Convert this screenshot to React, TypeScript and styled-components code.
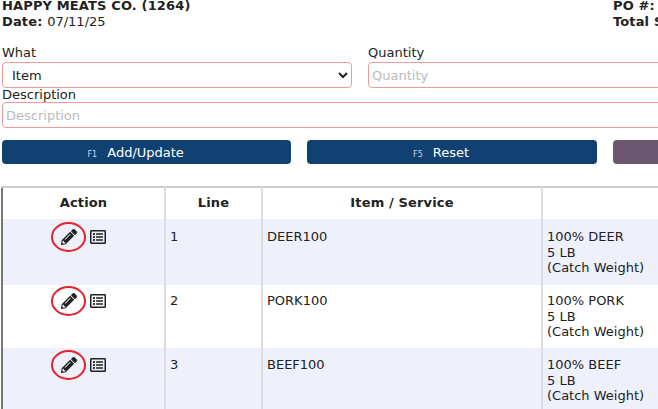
import styled, { createGlobalStyle } from 'styled-components';
import { FaPencilAlt, FaRegListAlt } from 'react-icons/fa';

const GlobalStyle = createGlobalStyle`
  html, body {
    margin: 0;
    padding: 0;
    height: 100%;
    overflow: hidden;
    background: #fff;
  }
  body {
    font-family: "DejaVu Sans", Verdana, sans-serif;
    font-size: 13px;
    color: #222;
  }
`;

type Row = { line: number; item: string; desc: string; height: number; top: number };

const rows: Row[] = [
  { line: 1, item: 'DEER100', desc: '100% DEER', height: 66, top: 10 },
  { line: 2, item: 'PORK100', desc: '100% PORK', height: 63, top: 8 },
  { line: 3, item: 'BEEF100', desc: '100% BEEF', height: 66, top: 9 },
];

export default function App() {
  return (
    <Page>
      <GlobalStyle />
      <Header>
        <div>
          <HeaderLine>HAPPY MEATS CO. (1264)</HeaderLine>
          <HeaderLine>
            Date: <Plain>07/11/25</Plain>
          </HeaderLine>
        </div>
        <div>
          <HeaderLine>PO #:</HeaderLine>
          <HeaderLine>Total Sales:</HeaderLine>
        </div>
      </Header>

      <FormRow>
        <Field>
          <Label>What</Label>
          <Select defaultValue="Item">
            <option>Item</option>
          </Select>
        </Field>
        <Field>
          <Label>Quantity</Label>
          <Input placeholder="Quantity" />
        </Field>
      </FormRow>
      <Field>
        <Label $tight>Description</Label>
        <Input placeholder="Description" />
      </Field>

      <Buttons>
        <Button>
          <Key>F1</Key>Add/Update
        </Button>
        <Button>
          <Key>F5</Key>Reset
        </Button>
        <Button $muted />
      </Buttons>

      <Table>
        <colgroup>
          <col width={163} />
          <col width={97} />
          <col width={280} />
          <col />
        </colgroup>
        <thead>
          <tr>
            <Th>Action</Th>
            <Th>Line</Th>
            <Th>Item / Service</Th>
            <Th>Description</Th>
          </tr>
        </thead>
        <tbody>
          {rows.map((row) => (
            <Tr key={row.line} $height={row.height}>
              <ActionCell $top={row.top}>
                <Actions>
                  <PencilRing>
                    <FaPencilAlt size={16} />
                  </PencilRing>
                  <FaRegListAlt size={16} />
                </Actions>
              </ActionCell>
              <Td $top={row.top}>{row.line}</Td>
              <Td $top={row.top}>{row.item}</Td>
              <Td $top={row.top}>
                {row.desc}
                <br />5 LB
                <br />
                (Catch Weight)
              </Td>
            </Tr>
          ))}
        </tbody>
      </Table>
    </Page>
  );
}

const Page = styled.div`
  width: 906px;
  margin-top: -2px;
  padding: 0 2px;
  box-sizing: border-box;
`;

const Header = styled.header`
  display: grid;
  grid-template-columns: 611px 1fr;
  margin-bottom: 15px;
`;

const HeaderLine = styled.div`
  font-weight: bold;
  line-height: 16px;
  letter-spacing: 0.14px;
  white-space: nowrap;
`;

const Plain = styled.span`
  font-weight: normal;
  letter-spacing: 0;
`;

const FormRow = styled.div`
  display: grid;
  grid-template-columns: 350px 1fr;
  gap: 16px;
`;

const Field = styled.div`
  display: flex;
  flex-direction: column;
`;

const Label = styled.label<{ $tight?: boolean }>`
  line-height: ${(p) => (p.$tight ? '14px' : '16px')};
  margin-bottom: ${(p) => (p.$tight ? '0' : '1px')};
`;

const Select = styled.select`
  height: 26px;
  box-sizing: border-box;
  border: 1px solid #ef9a9a;
  border-radius: 4px;
  background: #fff;
  padding: 0 5px;
  font: inherit;
  color: #222;
`;

const Input = styled.input`
  height: 26px;
  box-sizing: border-box;
  border: 1px solid #ef9a9a;
  border-radius: 4px;
  padding: 0 3px;
  font: inherit;
  color: #222;

  &::placeholder {
    color: #bbb;
  }
`;

const Buttons = styled.div`
  display: grid;
  grid-template-columns: repeat(3, 289.4px);
  gap: 16px;
  margin-top: 12px;
`;

const Button = styled.button<{ $muted?: boolean }>`
  height: 24px;
  border: 0;
  border-radius: 4px;
  background: ${(p) => (p.$muted ? '#6b5870' : '#114172')};
  color: #fff;
  font: inherit;
  padding: 0 22px 0 0;
`;

const Key = styled.span`
  font-size: 8px;
  color: #c9d6e6;
  margin-right: 10px;
`;

const Table = styled.table`
  width: 100%;
  margin: 22px 0 0 -1px;
  border-collapse: collapse;
  table-layout: fixed;
  border-top: 2px solid #ccc;
  border-left: 2px solid #777;
`;

const Th = styled.th`
  height: 29px;
  padding: 0 0 2px;
  text-align: center;
  letter-spacing: 0.15px;
  border-right: 2px solid #ddd;
`;

const Tr = styled.tr<{ $height: number }>`
  height: ${(p) => p.$height}px;

  &:nth-child(odd) {
    background: #eef1fc;
  }
`;

const Td = styled.td<{ $top: number }>`
  padding: ${(p) => p.$top}px 4px 0;
  vertical-align: top;
  line-height: 15.7px;
  border-right: 2px solid #ddd;
`;

const ActionCell = styled(Td)`
  padding-left: 0;
  padding-right: 0;
`;

const Actions = styled.div`
  display: flex;
  justify-content: center;
  align-items: center;
  gap: 13px;
  padding-right: 1px;
`;

const PencilRing = styled.span`
  position: relative;
  display: flex;

  &::after {
    content: '';
    position: absolute;
    left: -10px;
    top: -7px;
    width: 31px;
    height: 26px;
    border: 2px solid #e8202a;
    border-radius: 50%;
  }
`;
